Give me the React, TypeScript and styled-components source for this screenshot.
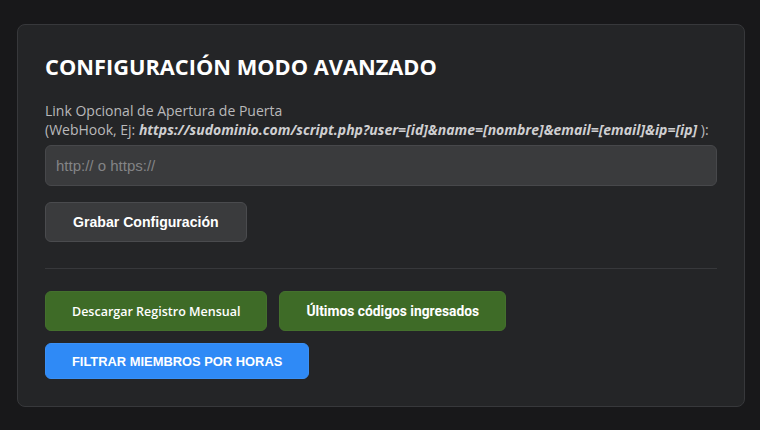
import React from "react";
import styled, { createGlobalStyle } from "styled-components";

const Global = createGlobalStyle`
  html, body { margin: 0; padding: 0; background: #18181a; }
  * { box-sizing: border-box; }
`;

const Page = styled.div`
  width: 760px;
  height: 430px;
  padding: 24px 15px 0 17px;
  background: #18181a;
`;

const Card = styled.section`
  height: 383px;
  background: #242527;
  border: 1px solid #37383b;
  border-radius: 8px;
  padding: 27px 27px 27px 27px;
  display: flex;
  flex-direction: column;
`;

const Title = styled.h1`
  margin: 0;
  font-family: "Open Sans", sans-serif;
  font-weight: 700;
  font-size: 21.8px;
  line-height: 30px;
  color: #ffffff;
`;

const Label = styled.label`
  margin-top: 19px;
  font-family: "Open Sans", sans-serif;
  font-size: 14px;
  line-height: 19px;
  color: #b9b9bb;
`;

const Url = styled.b`
  font-style: italic;
  font-weight: 700;
  color: #cfcfd1;
`;

const Input = styled.input`
  margin-top: 6px;
  height: 41px;
  width: 100%;
  padding: 0 10px;
  background: #3a3b3d;
  border: 1px solid #47484b;
  border-radius: 6px;
  font-family: "Liberation Sans", Arial, sans-serif;
  font-size: 15px;
  color: #ddd;
  outline: none;
  &::placeholder { color: #838486; }
`;

const SaveButton = styled.button`
  margin-top: 16px;
  align-self: flex-start;
  height: 40px;
  padding: 0 27px;
  background: #3a3b3d;
  border: 1px solid #4a4b4e;
  border-radius: 6px;
  font-family: "Liberation Sans", Arial, sans-serif;
  font-weight: 700;
  font-size: 14.1px;
  color: #ffffff;
`;

const Divider = styled.hr`
  margin: 26px 0 22px;
  border: none;
  border-top: 1px solid #37383b;
  height: 0;
`;

const Row = styled.div`
  display: flex;
  gap: 12px;
  & + & { margin-top: 12px; }
`;

const ActionButton = styled.button<{
  $variant: "green" | "blue";
  $font: string;
  $size: number;
  $weight: number;
}>`
  height: ${(p) => (p.$variant === "blue" ? 36 : 40)}px;
  padding: 0 26px;
  background: ${(p) => (p.$variant === "blue" ? "#2f8af6" : "#3e6b27")};
  border: 1px solid ${(p) => (p.$variant === "blue" ? "#3a90f5" : "#44702d")};
  border-radius: 6px;
  font-family: ${(p) => p.$font};
  font-weight: ${(p) => p.$weight};
  font-size: ${(p) => p.$size}px;
  color: #ffffff;
`;

export default function App() {
  return (
    <>
      <Global />
      <Page>
        <Card>
          <Title>CONFIGURACIÓN MODO AVANZADO</Title>
          <Label>
            Link Opcional de Apertura de Puerta
            <br />
            (WebHook, Ej:{" "}
            <Url>https://sudominio.com/script.php?user=[id]&amp;name=[nombre]&amp;email=[email]&amp;ip=[ip]</Url> ):
          </Label>
          <Input placeholder="http:// o https://" />
          <SaveButton>Grabar Configuración</SaveButton>
          <Divider />
          <Row>
            <ActionButton $variant="green" $font={'"Open Sans", sans-serif'} $size={12.5} $weight={600}>
              Descargar Registro Mensual
            </ActionButton>
            <ActionButton $variant="green" $font={"Roboto, sans-serif"} $size={13.8} $weight={700}>
              Últimos códigos ingresados
            </ActionButton>
          </Row>
          <Row>
            <ActionButton $variant="blue" $font={'"Liberation Sans", Arial, sans-serif'} $size={12.9} $weight={700}>
              FILTRAR MIEMBROS POR HORAS
            </ActionButton>
          </Row>
        </Card>
      </Page>
    </>
  );
}
